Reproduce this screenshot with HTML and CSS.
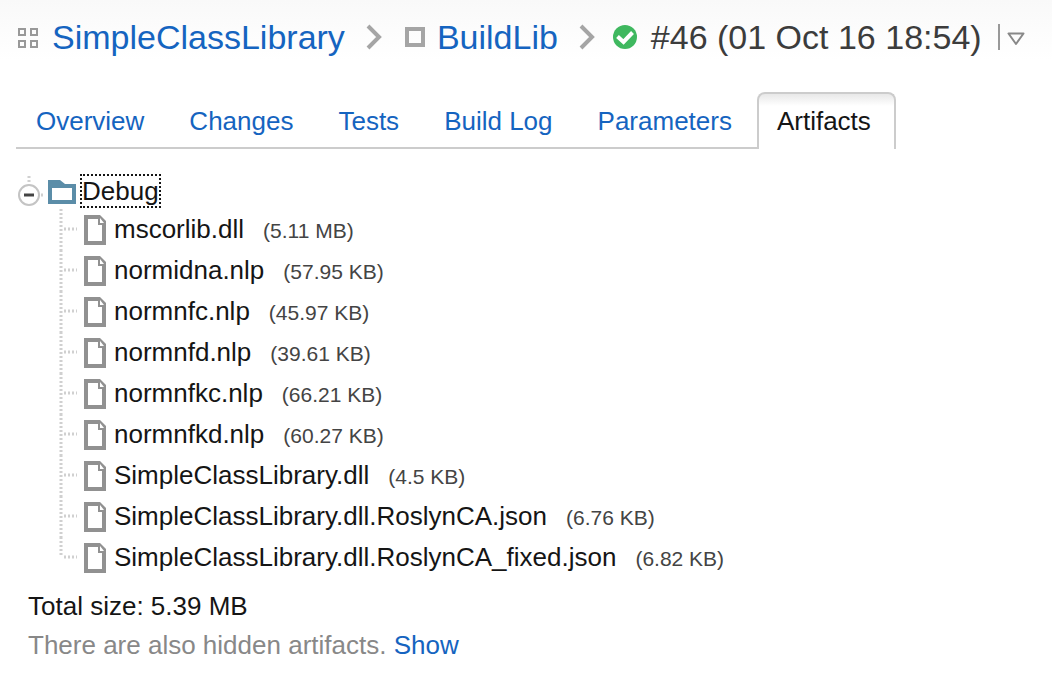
FILE: index.html
```html
<!DOCTYPE html>
<html lang="en">
<head>
<meta charset="utf-8">
<meta name="viewport" content="width=device-width, initial-scale=1">
<title>SimpleClassLibrary - BuildLib - Artifacts</title>
<link rel="stylesheet" href="styles.css">
</head>
<body>
<svg class="sprite" width="0" height="0" aria-hidden="true">
  <symbol id="file" viewBox="0 0 22 30">
    <path fill="#919191" d="M0 0h16l6 6v24H0z"/>
    <path fill="#fff" d="M4 4h10v6h4v16H4zM16 3v5h4z"/>
  </symbol>
  <symbol id="branch" viewBox="0 0 18 41">
    <path class="dots" d="M2 0V41"/>
    <path class="dots" d="M5 20H18"/>
  </symbol>
  <symbol id="branch-end" viewBox="0 0 18 41">
    <path class="dots" d="M2 0V19"/>
    <path class="dots" d="M5 20H18"/>
  </symbol>
</svg>
<header class="header">
  <nav class="crumbs" aria-label="Breadcrumb">
    <svg class="icon-project" width="20" height="24" viewBox="0 -3 20 24" aria-hidden="true"><path fill="none" stroke="#999" stroke-width="2" d="M1 1h6v6H1zM13 1h6v6h-6zM1 13h6v6H1zM13 13h6v6h-6z"/></svg>
    <a class="link" href="#">SimpleClassLibrary</a>
    <svg class="chevron" width="16" height="26" viewBox="0 0 16 26" aria-hidden="true"><path fill="none" stroke="#a5a5a5" stroke-width="4" d="M2 2l11 11L2 24"/></svg>
    <svg class="icon-config" width="20" height="20" viewBox="0 0 20 20" aria-hidden="true"><path fill="none" stroke="#a5a5a5" stroke-width="4" d="M2 2h16v16H2z"/></svg>
    <a class="link" href="#">BuildLib</a>
    <svg class="chevron" width="16" height="26" viewBox="0 0 16 26" aria-hidden="true"><path fill="none" stroke="#a5a5a5" stroke-width="4" d="M2 2l11 11L2 24"/></svg>
    <svg class="icon-status" width="24" height="24" viewBox="0 0 24 24" role="img" aria-label="Success"><circle cx="12" cy="12" r="12" fill="#3fb85f"/><path fill="none" stroke="#fff" stroke-width="4" d="M4.500 11.500l6 5.500L19.500 7.500"/></svg>
    <h1 class="build">#46 (01 Oct 16 18:54)</h1>
    <button class="menu" type="button" aria-label="Build menu"><svg width="18" height="18" viewBox="0 -4 18 18" aria-hidden="true"><path fill="none" stroke="#888" stroke-width="2" stroke-linejoin="round" d="M1.500 1.500h15L9 12z"/></svg></button>
  </nav>
</header>
<nav class="tabs" aria-label="Build results">
  <a class="tab" href="#">Overview</a>
  <a class="tab" href="#">Changes</a>
  <a class="tab" href="#">Tests</a>
  <a class="tab" href="#">Build Log</a>
  <a class="tab" href="#">Parameters</a>
  <a class="tab tab-active" href="#" aria-current="page">Artifacts</a>
</nav>
<main class="content">
  <div class="folder">
    <button class="toggle" type="button" aria-label="Collapse Debug"><svg width="27" height="32" viewBox="0 0 27 32" aria-hidden="true"><path class="dots" d="M11 1V9M23 20h4"/><circle cx="11" cy="20" r="10" fill="#fff" stroke="#c4c4c4" stroke-width="2"/><path stroke="#444" stroke-width="3" d="M6 20h10"/></svg></button>
    <svg class="icon-folder" width="28" height="26" viewBox="0 -2 28 26" aria-hidden="true"><path fill="#5b8da8" fill-rule="evenodd" d="M0 0h12l5 4h11v20H0zM4 8v12h20V8z"/></svg>
    <span class="folder-name">Debug</span>
  </div>
  <ul class="files">
    <li class="file"><svg class="branch" width="18" height="41"><use href="#branch"/></svg><svg class="icon-file" width="22" height="30"><use href="#file"/></svg><span>mscorlib.dll<span class="size">(5.11 MB)</span></span></li>
    <li class="file"><svg class="branch" width="18" height="41"><use href="#branch"/></svg><svg class="icon-file" width="22" height="30"><use href="#file"/></svg><span>normidna.nlp<span class="size">(57.95 KB)</span></span></li>
    <li class="file"><svg class="branch" width="18" height="41"><use href="#branch"/></svg><svg class="icon-file" width="22" height="30"><use href="#file"/></svg><span>normnfc.nlp<span class="size">(45.97 KB)</span></span></li>
    <li class="file"><svg class="branch" width="18" height="41"><use href="#branch"/></svg><svg class="icon-file" width="22" height="30"><use href="#file"/></svg><span>normnfd.nlp<span class="size">(39.61 KB)</span></span></li>
    <li class="file"><svg class="branch" width="18" height="41"><use href="#branch"/></svg><svg class="icon-file" width="22" height="30"><use href="#file"/></svg><span>normnfkc.nlp<span class="size">(66.21 KB)</span></span></li>
    <li class="file"><svg class="branch" width="18" height="41"><use href="#branch"/></svg><svg class="icon-file" width="22" height="30"><use href="#file"/></svg><span>normnfkd.nlp<span class="size">(60.27 KB)</span></span></li>
    <li class="file"><svg class="branch" width="18" height="41"><use href="#branch"/></svg><svg class="icon-file" width="22" height="30"><use href="#file"/></svg><span>SimpleClassLibrary.dll<span class="size">(4.5 KB)</span></span></li>
    <li class="file"><svg class="branch" width="18" height="41"><use href="#branch"/></svg><svg class="icon-file" width="22" height="30"><use href="#file"/></svg><span>SimpleClassLibrary.dll.RoslynCA.json<span class="size">(6.76 KB)</span></span></li>
    <li class="file"><svg class="branch" width="18" height="41"><use href="#branch-end"/></svg><svg class="icon-file" width="22" height="30"><use href="#file"/></svg><span>SimpleClassLibrary.dll.RoslynCA_fixed.json<span class="size">(6.82 KB)</span></span></li>
  </ul>
  <div class="summary">
    <p class="total">Total size: 5.39 MB</p>
    <p class="hidden-note">There are also hidden artifacts. <a class="link" href="#">Show</a></p>
  </div>
</main>
</body>
</html>
```
FILE: styles.css
```css
* { box-sizing: border-box; }

body {
  margin: 0;
  background: #fff;
  color: #151515;
  font-family: "Liberation Sans", Arial, sans-serif;
  font-size: 26px;
  line-height: 30px;
}

.sprite { position: absolute; }

.link { color: #1564c0; text-decoration: none; }

.header {
  padding: 16px 18px 34px;
  background: linear-gradient(#f9f9f9, #fff 60px);
}

.crumbs {
  display: flex;
  align-items: center;
  font-size: 34px;
  line-height: 42px;
  white-space: nowrap;
}

.icon-project { margin-right: 14px; }
.chevron { margin: 0 18px 0 21px; }
.icon-config { margin: 0 12px 0 5px; }
.icon-status { margin-right: 14px; }

.build {
  margin: 0;
  color: #3c3c3c;
  font-size: 34px;
  font-weight: 400;
}

.menu {
  display: flex;
  align-items: center;
  height: 26px;
  margin-left: 16px;
  padding: 0 0 0 7px;
  border: 0;
  border-left: 2px solid #999;
  background: none;
}

.tabs {
  display: flex;
  padding-left: 16px;
}

.tab {
  height: 57px;
  padding: 14px 25px 0 20px;
  border-bottom: 2px solid #ccc;
  color: #1564c0;
  text-decoration: none;
  white-space: nowrap;
}

.tab-active {
  padding: 12px 23px 0 18px;
  border: 2px solid #ccc;
  border-bottom: 0;
  border-radius: 8px 8px 0 0;
  background: linear-gradient(#e8e8e8, #fff 12px);
  color: #151515;
}

.content { padding: 25px 18px; }

.folder {
  display: flex;
  align-items: center;
}

.toggle {
  display: flex;
  margin-right: 3px;
  padding: 0;
  border: 0;
  background: none;
}

.folder-name {
  margin-left: 4px;
  border: 2px dotted #151515;
}

.files {
  margin: 0;
  padding: 1px 0 0 41px;
  list-style: none;
}

.file {
  display: flex;
  align-items: center;
  white-space: nowrap;
}

.branch { margin-right: 7px; }
.icon-file { margin-right: 8px; }

.size {
  margin-left: 19px;
  color: #444;
  font-size: 21px;
}

.dots {
  fill: none;
  stroke: #d0d0d0;
  stroke-width: 3;
  stroke-dasharray: 2 2;
}

.summary { padding: 9px 10px 0; line-height: 39px; }

.total, .hidden-note { margin: 0; }

.hidden-note { color: #888; }
```
